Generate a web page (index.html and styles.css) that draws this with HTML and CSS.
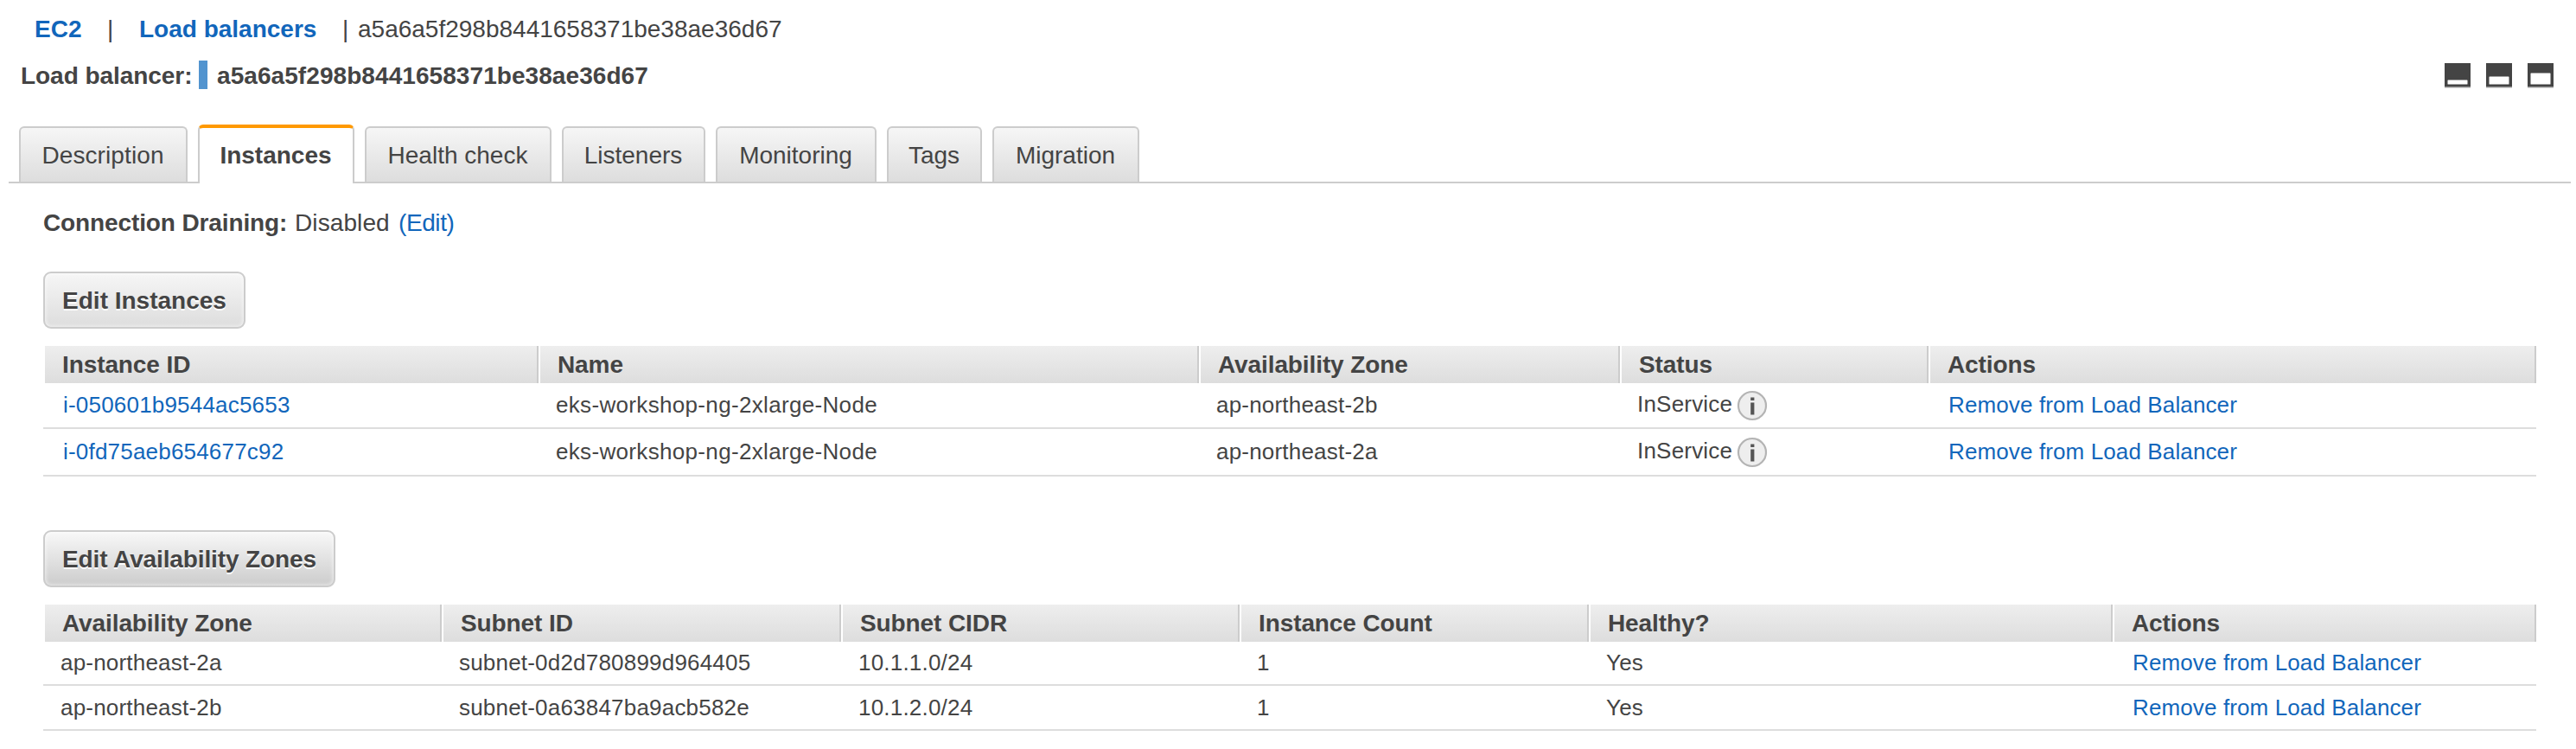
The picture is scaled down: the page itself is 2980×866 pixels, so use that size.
FILE: index.html
```html
<!DOCTYPE html>
<html lang="en">
<head>
<meta charset="utf-8">
<title>Load balancers</title>
<link rel="stylesheet" href="styles.css">
</head>
<body>
<nav class="crumbs"><a class="crumb-ec2">EC2</a><span class="bar-a">|</span><a class="crumb-lb">Load balancers</a><span class="bar-b">|</span><span>a5a6a5f298b8441658371be38ae36d67</span></nav>
<header class="title">
  <span class="title-label">Load balancer:</span><i class="mark"></i><span class="title-id">a5a6a5f298b8441658371be38ae36d67</span>
  <div class="layouts">
    <svg width="30" height="29"><path fill="#444" d="M0 0h30v27H0z"/><path fill="#949494" d="M0 27h30v1H0z"/><path fill="#ccc" d="M0 28h30v1H0z"/><rect x="3.5" y="19.4" width="23" height="5.2" rx=".6" fill="#fff"/></svg>
    <svg width="30" height="29"><path fill="#444" d="M0 0h30v27H0z"/><path fill="#949494" d="M0 27h30v1H0z"/><path fill="#ccc" d="M0 28h30v1H0z"/><rect x="3.5" y="15.4" width="23" height="9.2" rx=".6" fill="#fff"/></svg>
    <svg width="30" height="29"><path fill="#444" d="M0 0h30v27H0z"/><path fill="#949494" d="M0 27h30v1H0z"/><path fill="#ccc" d="M0 28h30v1H0z"/><rect x="3.5" y="11.4" width="23" height="13.2" rx=".6" fill="#fff"/></svg>
  </div>
</header>
<div class="tabs">
  <div class="tab t1">Description</div>
  <div class="tab t2 active">Instances</div>
  <div class="tab t3">Health check</div>
  <div class="tab t4">Listeners</div>
  <div class="tab t5">Monitoring</div>
  <div class="tab t6">Tags</div>
  <div class="tab t7">Migration</div>
</div>
<main class="panel">
  <p class="drain"><b>Connection Draining:</b><span class="state">Disabled</span><a>(Edit)</a></p>
  <button class="btn btn-inst">Edit Instances</button>
  <section class="table inst">
    <div class="row head"><div>Instance ID</div><div>Name</div><div>Availability Zone</div><div>Status</div><div>Actions</div></div>
    <div class="row"><div><a>i-050601b9544ac5653</a></div><div class="name">eks-workshop-ng-2xlarge-Node</div><div>ap-northeast-2b</div><div class="status"><span>InService</span><svg class="info" width="36" height="36" viewBox="0 0 36 36"><circle cx="18" cy="18" r="16" fill="#eee" stroke="#b4b4b4" stroke-width="2.2"/><path fill="#555" d="M16.2 8.6h4.2v3.4h-4.2zM16.2 14.4h4.2v14.2h-4.2z"/></svg></div><div class="action"><a>Remove from Load Balancer</a></div></div>
    <div class="row last"><div><a>i-0fd75aeb654677c92</a></div><div class="name">eks-workshop-ng-2xlarge-Node</div><div>ap-northeast-2a</div><div class="status"><span>InService</span><svg class="info" width="36" height="36" viewBox="0 0 36 36"><circle cx="18" cy="18" r="16" fill="#eee" stroke="#b4b4b4" stroke-width="2.2"/><path fill="#555" d="M16.2 8.6h4.2v3.4h-4.2zM16.2 14.4h4.2v14.2h-4.2z"/></svg></div><div class="action"><a>Remove from Load Balancer</a></div></div>
  </section>
  <button class="btn btn-zone">Edit Availability Zones</button>
  <section class="table zones">
    <div class="row head"><div>Availability Zone</div><div>Subnet ID</div><div>Subnet CIDR</div><div>Instance Count</div><div>Healthy?</div><div>Actions</div></div>
    <div class="row"><div>ap-northeast-2a</div><div>subnet-0d2d780899d964405</div><div>10.1.1.0/24</div><div>1</div><div>Yes</div><div class="action"><a>Remove from Load Balancer</a></div></div>
    <div class="row"><div>ap-northeast-2b</div><div>subnet-0a63847ba9acb582e</div><div>10.1.2.0/24</div><div>1</div><div>Yes</div><div class="action"><a>Remove from Load Balancer</a></div></div>
  </section>
</main>
</body>
</html>
```
FILE: styles.css
```css
* { box-sizing: border-box; }
body {
  margin: 0;
  height: 866px;
  overflow: hidden;
  background: #fff;
  color: #444;
  font: 28px/32px "Liberation Sans", Arial, Helvetica, sans-serif;
  white-space: nowrap;
}
a { color: #1166bb; }
.crumbs { display: flex; height: 53px; padding: 18px 0 0 40px; }
.crumbs a { font-weight: bold; }
.crumb-ec2 { width: 84px; }
.bar-a { width: 37px; }
.crumb-lb { width: 235px; }
.bar-b { width: 18px; }
.title { display: flex; height: 50px; padding: 17px 26px 0 24px; font-weight: bold; line-height: 35px; }
.title-label { width: 206px; letter-spacing: -0.05px; }
.title-id { letter-spacing: 0.07px; }
.mark { width: 10px; height: 33px; margin-right: 11px; background: #5294cf; }
.layouts { display: flex; gap: 18px; margin: 3px 0 0 auto; }
.layouts svg { display: block; }
.tabs {
  display: flex;
  align-items: flex-end;
  gap: 12px;
  height: 109px;
  margin: 0 6px 0 10px;
  padding-left: 12px;
  border-bottom: 2px solid #ccc;
}
.tab {
  height: 64px;
  padding-right: 1px;
  border: 2px solid #ccc;
  border-bottom: 0;
  border-radius: 6px 6px 0 0;
  background: linear-gradient(#f6f6f6, #ddd);
  line-height: 64px;
  text-align: center;
}
.t1 { width: 195px; letter-spacing: 0.1px; }
.t2 { width: 181px; }
.t3 { width: 216px; }
.t4 { width: 166px; }
.t5 { width: 186px; }
.t6 { width: 110px; }
.t7 { width: 170px; }
.tab.active {
  height: 68px;
  margin-bottom: -2px;
  border-top: 4px solid #f90;
  background: #fff;
  font-weight: bold;
}
.panel { padding: 30px 46px 0 50px; }
.drain { display: flex; height: 72px; margin: 0; }
.drain b { width: 291px; letter-spacing: -0.12px; }
.drain a { letter-spacing: -0.4px; }
.state { width: 120px; letter-spacing: 0.1px; }
.btn {
  display: block;
  height: 66px;
  padding: 0;
  border: 2px solid #ccc;
  border-radius: 9px;
  background: linear-gradient(#f6f6f6, #ddd);
  box-shadow: inset 0 0 4px 1px rgba(255, 255, 255, .6);
  color: #444;
  font: bold 28px/61px "Liberation Sans", Arial, sans-serif;
  text-shadow: 0 2px 0 #fff;
}
.btn-inst { width: 234px; }
.btn-zone { width: 338px; margin-top: 62px; background: linear-gradient(#f8f8f8, #ccc); letter-spacing: -0.12px; }
.table { margin-top: 20px; font-size: 26px; letter-spacing: 0.2px; }
.row { display: grid; height: 54px; border-bottom: 2px solid #ddd; }
.row > div { padding-left: 20px; line-height: 52px; }
.row a { padding-left: 3px; }
.row .name { letter-spacing: 0.33px; }
.row .action { letter-spacing: 0.12px; }
.inst .row { grid-template-columns: 573px 764px 487px 357px 703px; }
.inst .last { height: 55px; }
.zones .row { grid-template-columns: 461px 462px 461px 404px 606px 490px; height: 52px; }
.zones .row > div { line-height: 50px; }
.inst .row.head, .zones .row.head {
  height: 42px;
  border: 0;
  font-size: 28px;
  font-weight: bold;
  letter-spacing: -0.1px;
}
.inst .row.head > div, .zones .row.head > div {
  padding-left: 20px;
  border-left: 2px solid #fff;
  border-right: 2px solid #ccc;
  background: linear-gradient(#eee, #ddd);
  line-height: 43px;
}
.status { display: flex; }
.row .status span { width: 115px; line-height: 50px; }
.info { margin-top: 9px; }
```
